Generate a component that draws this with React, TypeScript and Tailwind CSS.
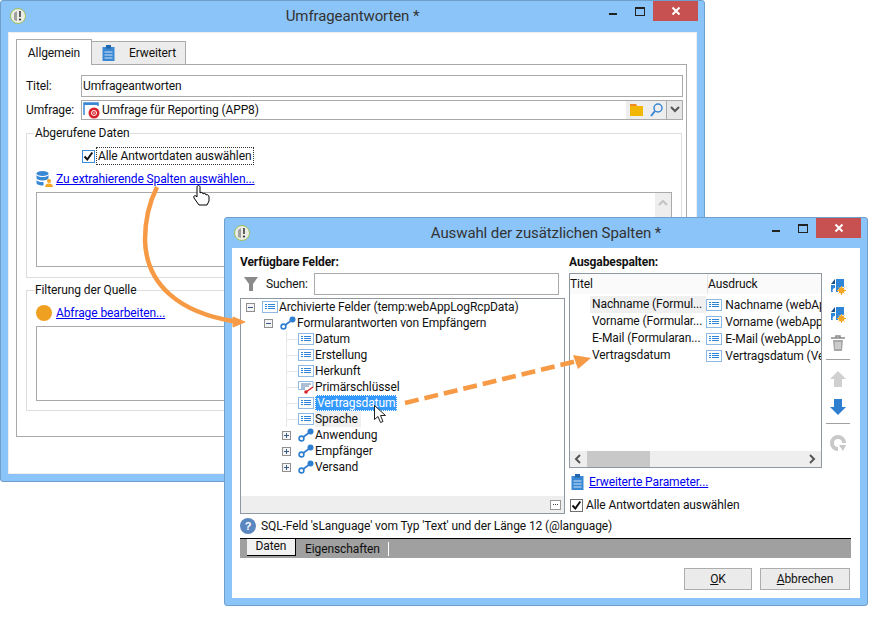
import React from 'react';

// small drawn icons
const FieldIcon: React.FC = () => (
    <svg width="16" height="14" viewBox="0 0 16 14" className="shrink-0">
        <rect x="0.5" y="1.5" width="15" height="11" fill="#fff" stroke="#8db9e4" />
        <rect x="3" y="4" width="2" height="1" fill="#2f86d8" />
        <rect x="6" y="4" width="7" height="1" fill="#2f86d8" />
        <rect x="3" y="6" width="2" height="1" fill="#2f86d8" />
        <rect x="6" y="6" width="7" height="1" fill="#2f86d8" />
        <rect x="3" y="8" width="2" height="1" fill="#2f86d8" />
        <rect x="6" y="8" width="7" height="1" fill="#2f86d8" />
    </svg>
);

const KeyFieldIcon: React.FC = () => (
    <svg width="16" height="14" viewBox="0 0 16 14" className="shrink-0">
        <path d="M15 8V1.500H0.500V9.500H7" fill="#fff" stroke="#8db9e4" />
        <path d="M3 4h10M3 6h8M3 8h4" stroke="#5a7fa8" strokeWidth="1" />
        <path d="M8 12l7-5" stroke="#d8232a" strokeWidth="1.5" />
        <circle cx="8" cy="12" r="1.8" fill="#d8232a" />
    </svg>
);

const LinkIcon: React.FC = () => (
    <svg width="16" height="14" viewBox="0 0 16 14" className="shrink-0">
        <path d="M4 10L12 4" stroke="#2f7fd1" strokeWidth="1.6" />
        <circle cx="3.5" cy="10.5" r="2.4" fill="#fff" stroke="#2f7fd1" strokeWidth="1.6" />
        <circle cx="12.5" cy="3.5" r="3" fill="#2f7fd1" />
    </svg>
);

const ClipboardIcon: React.FC = () => (
    <svg width="13" height="16" viewBox="0 0 13 16" className="shrink-0">
        <rect x="0.5" y="2" width="12" height="14" fill="#3a87d4" />
        <rect x="4" y="0" width="5" height="3.5" fill="#1f66ad" />
        <path d="M2.5 7h8M2.5 10h8M2.5 13h8" stroke="#cfe4f8" strokeWidth="1" />
    </svg>
);

const AppIcon: React.FC = () => (
    <svg width="16" height="16" viewBox="0 0 16 16" className="shrink-0">
        <circle cx="8" cy="8" r="7.5" fill="#ecece6" stroke="#9cc05a" />
        <path d="M4 5l3-2v10l-3-1z" fill="#a0a0a0" />
        <path d="M10 3v6" stroke="#333" strokeWidth="1.5" />
        <circle cx="10" cy="11.500" r="1.1" fill="#333" />
    </svg>
);

const ColumnAddIcon: React.FC = () => (
    <svg width="16" height="16" viewBox="0 0 16 16">
        <path d="M5 0v5H1z" fill="#1b4f86" />
        <path d="M6 0h8v8a4.500 4.500 0 0 0-6 5H6z" fill="#2f86d8" />
        <path d="M1 6h4v3a2.500 2.500 0 0 0-2 4H1z" fill="#2f86d8" />
        <circle cx="11.500" cy="11.500" r="3" fill="#f5a623" />
        <path d="M11.500 7v9M7 11.500h9M8.500 8.500l6 6M14.500 8.500l-6 6" stroke="#f5a623" strokeWidth="1" />
    </svg>
);

const SmallChevron: React.FC<{ dir: 'up' | 'down' | 'left' | 'right'; color?: string }> = ({ dir, color = '#555' }) => {
    const paths = {
        up: 'M1 6l4-4 4 4',
        down: 'M1 2l4 4 4-4',
        left: 'M6 1L2 5l4 4',
        right: 'M3 1l4 4-4 4',
    };
    return (
        <svg width="10" height="10" viewBox="0 0 10 10" className="shrink-0">
            <path d={paths[dir]} fill="none" stroke={color} strokeWidth="2" />
        </svg>
    );
};

const Expander: React.FC<{ open?: boolean }> = ({ open }) => (
    <span className="relative flex h-[9px] w-[9px] items-center justify-center border border-[#8f8f8f] bg-[#f4f4f4]">
        <span className="h-px w-[5px] bg-[#3a5a8a]" />
        {!open && <span className="absolute h-[5px] w-px bg-[#3a5a8a]" />}
    </span>
);

const Checkbox: React.FC<{ blue?: boolean }> = ({ blue }) => (
    <span className={`flex h-[13px] w-[13px] shrink-0 items-center justify-center border bg-white ${blue ? 'border-[#3a8ee0]' : 'border-[#707070]'}`}>
        <svg width="11" height="11" viewBox="0 0 11 11">
            <path d="M1.5 5.500l2.800 3 5-7" fill="none" stroke="#111" strokeWidth="2" />
        </svg>
    </span>
);

const TitleBar: React.FC<{ title: string }> = ({ title }) => (
    <div className="grid grid-cols-[1fr_auto_1fr] text-[15px] text-[#333]">
        <div className="pl-[9px] pt-[7px]">
            <AppIcon />
        </div>
        <div className="pt-[5px] leading-[20px]">{title}</div>
        <div className="flex justify-end pr-[6px]">
            <span className="mr-[18px] mt-[12px] h-[2px] w-[8px] bg-[#222]" />
            <span className="mr-[8px] mt-[6px] h-[9px] w-[10px] border border-t-2 border-[#222]" />
            <span className="flex h-[20px] w-[45px] items-center justify-center bg-[#c75050]">
                <svg width="10" height="10" viewBox="0 0 10 10">
                    <path d="M1.5 1.500l7 7M8.500 1.500l-7 7" stroke="#fff" strokeWidth="2" />
                </svg>
            </span>
        </div>
    </div>
);

const treeRows = [
    { label: 'Archivierte Felder (temp:webAppLogRcpData)', pad: 'pl-[5px]', exp: 'open', icon: 'field' },
    { label: 'Formularantworten von Empfängern', pad: 'pl-[23px]', exp: 'open', icon: 'link' },
    { label: 'Datum', pad: 'pl-[41px]', exp: 'line', icon: 'field' },
    { label: 'Erstellung', pad: 'pl-[41px]', exp: 'line', icon: 'field' },
    { label: 'Herkunft', pad: 'pl-[41px]', exp: 'line', icon: 'field' },
    { label: 'Primärschlüssel', pad: 'pl-[41px]', exp: 'line', icon: 'key' },
    { label: 'Vertragsdatum', pad: 'pl-[41px]', exp: 'line', icon: 'field', selected: true },
    { label: 'Sprache', pad: 'pl-[41px]', exp: 'line', icon: 'field', hover: true },
    { label: 'Anwendung', pad: 'pl-[41px]', exp: 'closed', icon: 'link' },
    { label: 'Empfänger', pad: 'pl-[41px]', exp: 'closed', icon: 'link' },
    { label: 'Versand', pad: 'pl-[41px]', exp: 'closed', icon: 'link' },
];

const outputRows = [
    { title: 'Nachname (Formul...', expr: 'Nachname (webAppLogRcpData)', active: true },
    { title: 'Vorname (Formular...', expr: 'Vorname (webAppLogRcpData)' },
    { title: 'E-Mail (Formularan...', expr: 'E-Mail (webAppLogRcpData)' },
    { title: 'Vertragsdatum', expr: 'Vertragsdatum (Vertragsdatum)' },
];

const GeneralWindow: React.FC = () => (
    <div className="absolute left-0 top-0 flex h-[482px] w-[705px] flex-col rounded-[3px] border border-[#6f9fcc] bg-[#8bc4f8]">
        <div className="h-[31px]">
            <TitleBar title="Umfrageantworten *" />
        </div>
        <div className="mx-[7px] mb-[7px] flex-1 border border-[#eeeeee] bg-white pl-[7px] pt-[6px]">
            <div className="flex h-[25px] items-end text-[12px] text-[#111]">
                <div className="relative z-10 -mb-px flex h-[26px] w-[76px] items-center justify-center border border-b-0 border-[#aaaaaa] bg-white">Allgemein</div>
                <div className="flex h-[23px] w-[94px] items-center gap-[14px] border border-b-0 border-l-0 border-[#aaaaaa] bg-[#ececec] pl-[10px]">
                    <ClipboardIcon />
                    <span>Erweitert</span>
                </div>
            </div>
            <div className="h-[373px] w-[671px] border border-[#aaaaaa] pl-[9px] pr-[2px] pt-[10px] text-[12px] text-[#111]">
                <div className="mb-[3px] flex items-center">
                    <span className="w-[55px]">Titel:</span>
                    <div className="flex h-[22px] w-[602px] items-center border border-[#aaaaaa] pl-[1px]">Umfrageantworten</div>
                </div>
                <div className="flex items-center">
                    <span className="w-[55px]">Umfrage:</span>
                    <div className="flex h-[20px] w-[602px] items-center border border-[#aaaaaa]">
                        <svg width="18" height="17" viewBox="0 0 18 17" className="ml-[1px] shrink-0">
                            <path d="M1 13V1h14v3" fill="#fff" stroke="#3a87d4" strokeWidth="1.5" />
                            <path d="M1 2h14" stroke="#3a87d4" strokeWidth="2" />
                            <circle cx="11" cy="11" r="5.500" fill="#d8232a" />
                            <circle cx="11" cy="11" r="2.500" fill="none" stroke="#fff" />
                            <circle cx="11" cy="11" r="0.800" fill="#fff" />
                        </svg>
                        <span className="ml-[1px] flex-1">Umfrage für Reporting (APP8)</span>
                        <div className="flex h-full w-[40px] items-center justify-center gap-[7px] bg-[#eeeeee]">
                            <svg width="13" height="12" viewBox="0 0 13 12">
                                <path d="M0 0h6l1 2h6v10H0z" fill="#f2b705" />
                                <path d="M0 0h6l1 2H0z" fill="#ef8a24" />
                            </svg>
                            <svg width="13" height="14" viewBox="0 0 13 14">
                                <circle cx="8" cy="5" r="4" fill="none" stroke="#3a87d4" strokeWidth="1.5" />
                                <path d="M5 8l-4 5" stroke="#3a87d4" strokeWidth="2" />
                            </svg>
                        </div>
                        <div className="flex h-full w-[16px] items-center justify-center border-l border-[#aaaaaa] bg-[#e6e6e6]">
                            <SmallChevron dir="down" />
                        </div>
                    </div>
                </div>
                <fieldset className="mt-[5px] w-[656px] border border-[#dddddd] pb-[10px]">
                    <legend className="ml-[7px] px-[1px] leading-[16px]">Abgerufene Daten</legend>
                    <div className="mt-[6px] flex h-[18px] items-center pl-[55px]">
                        <Checkbox blue />
                        <span className="ml-[1px] border border-dotted border-[#333] pl-[1px] pr-[2px] leading-[16px]">Alle Antwortdaten auswählen</span>
                    </div>
                    <div className="mt-[6px] flex h-[16px] items-center pl-[9px]">
                        <svg width="17" height="16" viewBox="0 0 17 16" className="shrink-0">
                            <ellipse cx="6.500" cy="2.500" rx="6" ry="2.500" fill="#3a87d4" />
                            <path d="M0.500 4v3c0 1.500 3 2.500 6 2.500s6-1 6-2.500V4c-1 1.500-3 2-6 2s-5-.5-6-2z" fill="#3a87d4" />
                            <path d="M0.500 9v3c0 1.500 3 2.500 6 2.500h1V11h-1c-3 0-5-.5-6-2z" fill="#3a87d4" />
                            <circle cx="13" cy="10" r="2" fill="#f5a623" />
                            <path d="M9 16c0-2.500 2-3.500 4-3.500s4 1 4 3.500z" fill="#f5a623" />
                        </svg>
                        <a className="ml-[3px] text-[#0000ee] underline">Zu extrahierende Spalten auswählen...</a>
                    </div>
                    <div className="ml-[9px] mt-[5px] flex h-[75px] w-[636px] justify-end border border-[#aaaaaa]">
                        <div className="flex h-[24px] w-[16px] justify-center bg-[#eeeeee] pt-[6px]">
                            <SmallChevron dir="up" color="#c4c4c4" />
                        </div>
                    </div>
                </fieldset>
                <fieldset className="mt-[4px] w-[656px] border border-[#dddddd] pb-[9px]">
                    <legend className="ml-[7px] px-[1px] leading-[16px]">Filterung der Quelle</legend>
                    <div className="mt-[7px] flex h-[16px] items-center pl-[9px]">
                        <span className="h-[16px] w-[16px] shrink-0 rounded-full bg-[#f0a020]" />
                        <a className="ml-[4px] text-[#0000ee] underline">Abfrage bearbeiten...</a>
                    </div>
                    <div className="ml-[9px] mt-[5px] h-[75px] w-[636px] border border-[#aaaaaa]" />
                </fieldset>
            </div>
        </div>
    </div>
);

const TreeRow: React.FC<{ row: (typeof treeRows)[number] }> = ({ row }) => (
    <div className={`flex h-[16px] items-center ${row.pad}`}>
        <span className="relative flex h-[16px] w-[16px] shrink-0 items-center">
            {row.exp === 'line' ? (
                <>
                    <span className="absolute left-[4px] top-0 h-full w-px bg-[#e8e8e8]" />
                    <span className="absolute left-[4px] top-[8px] h-px w-[12px] bg-[#e8e8e8]" />
                </>
            ) : (
                <Expander open={row.exp === 'open'} />
            )}
        </span>
        {row.icon === 'field' && <FieldIcon />}
        {row.icon === 'key' && <KeyFieldIcon />}
        {row.icon === 'link' && <LinkIcon />}
        {row.selected ? (
            <span className="ml-[1px] h-[16px] border border-dotted border-white bg-[#3399ff] px-[1px] leading-[14px] text-white">{row.label}</span>
        ) : (
            <span className={`ml-[1px] h-[16px] leading-[16px] ${row.hover ? 'bg-[#f0f0f0] pr-[3px]' : ''}`}>{row.label}</span>
        )}
    </div>
);

const ColumnsWindow: React.FC = () => (
    <div className="absolute left-[224px] top-[217px] flex h-[389px] w-[644px] flex-col rounded-[3px] border border-[#6f9fcc] bg-[#8bc4f8] text-[12px] text-[#111]">
        <div className="h-[30px]">
            <TitleBar title="Auswahl der zusätzlichen Spalten *" />
        </div>
        <div className="mx-[7px] mb-[7px] flex-1 bg-white px-[8px] pt-[6px]">
            <div className="flex gap-[4px]">
                <div className="w-[325px]">
                    <div className="h-[16px] font-bold leading-[16px]">Verfügbare Felder:</div>
                    <div className="mt-[3px] flex h-[22px] items-center">
                        <svg width="14" height="14" viewBox="0 0 14 14" className="ml-[4px] shrink-0">
                            <path d="M0 0h14L9 7v7H5V7z" fill="#8a8a8a" />
                        </svg>
                        <span className="ml-[8px] w-[48px]">Suchen:</span>
                        <div className="h-[22px] w-[245px] border border-[#aaaaaa]" />
                    </div>
                    <div className="mt-[3px] flex h-[216px] w-[325px] flex-col border border-[#8f98a0]">
                        <div className="flex-1">
                            {treeRows.map(row => (
                                <TreeRow key={row.label} row={row} />
                            ))}
                        </div>
                        <div className="flex h-[17px] items-center justify-end bg-[#eeeeee] pr-[3px]">
                            <span className="flex h-[10px] w-[11px] items-center justify-center gap-px border border-[#999] bg-white">
                                <span className="h-px w-px bg-[#444]" />
                                <span className="h-px w-px bg-[#444]" />
                                <span className="h-px w-px bg-[#444]" />
                            </span>
                        </div>
                    </div>
                </div>
                <div className="w-[253px]">
                    <div className="h-[16px] font-bold leading-[16px]">Ausgabespalten:</div>
                    <div className="mt-[3px] flex h-[195px] flex-col border border-[#8f98a0]">
                        <div className="flex h-[20px] bg-[#fafafa] leading-[20px]">
                            <span className="w-[138px] border-r border-[#e4e4e4]">Titel</span>
                            <span>Ausdruck</span>
                        </div>
                        <div className="flex-1 overflow-hidden pt-[2px]">
                            {outputRows.map(r => (
                                <div key={r.title} className="flex h-[17px] items-center whitespace-nowrap">
                                    <div className="w-[138px] pl-[20px]">
                                        <div className={`h-[17px] pl-[2px] leading-[17px] ${r.active ? 'bg-[#f0f0f0]' : ''}`}>{r.title}</div>
                                    </div>
                                    <FieldIcon />
                                    <span className="ml-[3px] w-[97px] overflow-hidden">{r.expr}</span>
                                </div>
                            ))}
                        </div>
                        <div className="flex h-[16px] items-center bg-[#eeeeee]">
                            <span className="ml-[4px] w-[13px]">
                                <SmallChevron dir="left" />
                            </span>
                            <span className="h-full w-[63px] bg-[#c8c8c8]" />
                            <span className="ml-auto mr-[4px]">
                                <SmallChevron dir="right" />
                            </span>
                        </div>
                    </div>
                    <div className="mt-[6px] flex h-[16px] items-center pl-[2px]">
                        <ClipboardIcon />
                        <a className="ml-[5px] text-[#0000ee] underline">Erweiterte Parameter...</a>
                    </div>
                    <div className="mt-[7px] flex h-[16px] items-center pl-px">
                        <Checkbox />
                        <span className="ml-[3px]">Alle Antwortdaten auswählen</span>
                    </div>
                </div>
                <div className="flex w-[24px] flex-col items-center pt-[25px]">
                    <ColumnAddIcon />
                    <div className="mt-[12px]">
                        <ColumnAddIcon />
                    </div>
                    <svg width="16" height="16" viewBox="0 0 16 16" className="mt-[12px]">
                        <path d="M1 3h14M6 3V1h4v2" fill="none" stroke="#8a8a8a" strokeWidth="1.5" />
                        <path d="M3 5h10l-1 11H4z" fill="#a8a8a8" />
                        <path d="M6 7v7M8 7v7M10 7v7" stroke="#eee" strokeWidth="1" />
                    </svg>
                    <div className="mt-[8px] h-px w-[24px] bg-[#a0a0a0]" />
                    <svg width="16" height="16" viewBox="0 0 16 16" className="mt-[11px]">
                        <path d="M8 0l8 8h-4v8H4V8H0z" fill="#d0d0d0" />
                    </svg>
                    <svg width="16" height="16" viewBox="0 0 16 16" className="mt-[12px]">
                        <path d="M8 16l8-8h-4V0H4v8H0z" fill="#2f7fd1" />
                    </svg>
                    <div className="mt-[8px] h-px w-[24px] bg-[#a0a0a0]" />
                    <svg width="16" height="16" viewBox="0 0 16 16" className="mt-[11px]">
                        <path d="M14 8A6 6 0 1 0 8 14" fill="none" stroke="#c8c8c8" strokeWidth="4" />
                        <path d="M9 10h7l-3 6z" fill="#c8c8c8" />
                    </svg>
                </div>
            </div>
            <div className="mt-[4px] flex h-[16px] items-center">
                <svg width="16" height="16" viewBox="0 0 16 16" className="shrink-0">
                    <circle cx="8" cy="8" r="8" fill="#5b87c0" />
                    <text x="8" y="12" textAnchor="middle" fontSize="11" fontWeight="bold" fill="#fff" fontFamily="Liberation Sans, sans-serif">?</text>
                </svg>
                <span className="ml-[5px]">SQL-Feld 'sLanguage' vom Typ 'Text' und der Länge 12 (@language)</span>
            </div>
            <div className="mt-[4px] flex h-[20px] w-[611px] border-t border-black bg-[#a0a0a0] pl-[7px]">
                <span className="h-[17px] w-[49px] border-b border-r border-black bg-[#f2f2f2] text-center leading-[15px]">Daten</span>
                <span className="ml-[9px] h-[14px] self-center border-r border-white pr-[8px] leading-[14px]">Eigenschaften</span>
            </div>
            <div className="mt-[10px] flex w-[610px] justify-end gap-[8px]">
                <button className="h-[22px] w-[68px] border border-[#adadad] bg-[#ebebeb]">
                    <u>O</u>K
                </button>
                <button className="h-[22px] w-[90px] border border-[#adadad] bg-[#ebebeb]">
                    <u>A</u>bbrechen
                </button>
            </div>
        </div>
    </div>
);

const Annotations: React.FC = () => (
    <svg width="884" height="623" viewBox="0 0 884 623" className="pointer-events-none absolute left-0 top-0 z-20">
        <path d="M157 187C148 205 145 225 145 240C146 285 180 313 235 321.500" fill="none" stroke="#f79a46" strokeWidth="4.500" />
        <path d="M233 317L245 322L233 327z" fill="#f79a46" stroke="#f79a46" />
        <path d="M405 403L577 361" fill="none" stroke="#f79a46" strokeWidth="4.500" strokeDasharray="14 6" />
        <path d="M573 355L591 358L578 369z" fill="#f79a46" />
        {/* hand cursor */}
        <path d="M197 187c0-2 3-2 3 0v6c1-1 3-1 3 1 1-1 3-1 3 1 1-1 3 0 3 2v4l-2 4h-8l-5-7c-1-2 1-3 2-2l1 1z" fill="#fff" stroke="#000" strokeWidth="1" />
        {/* arrow cursor */}
        <path d="M374.500 405.500v14l3.500-3 2.500 6 2.500-1-2.500-6h5z" fill="#fff" stroke="#222" strokeWidth="1" />
    </svg>
);

export default function App() {
    return (
        <div className="relative h-[623px] w-[884px] overflow-hidden bg-white font-['Roboto',sans-serif] tracking-[-0.1px]">
            <GeneralWindow />
            <ColumnsWindow />
            <Annotations />
        </div>
    );
}
